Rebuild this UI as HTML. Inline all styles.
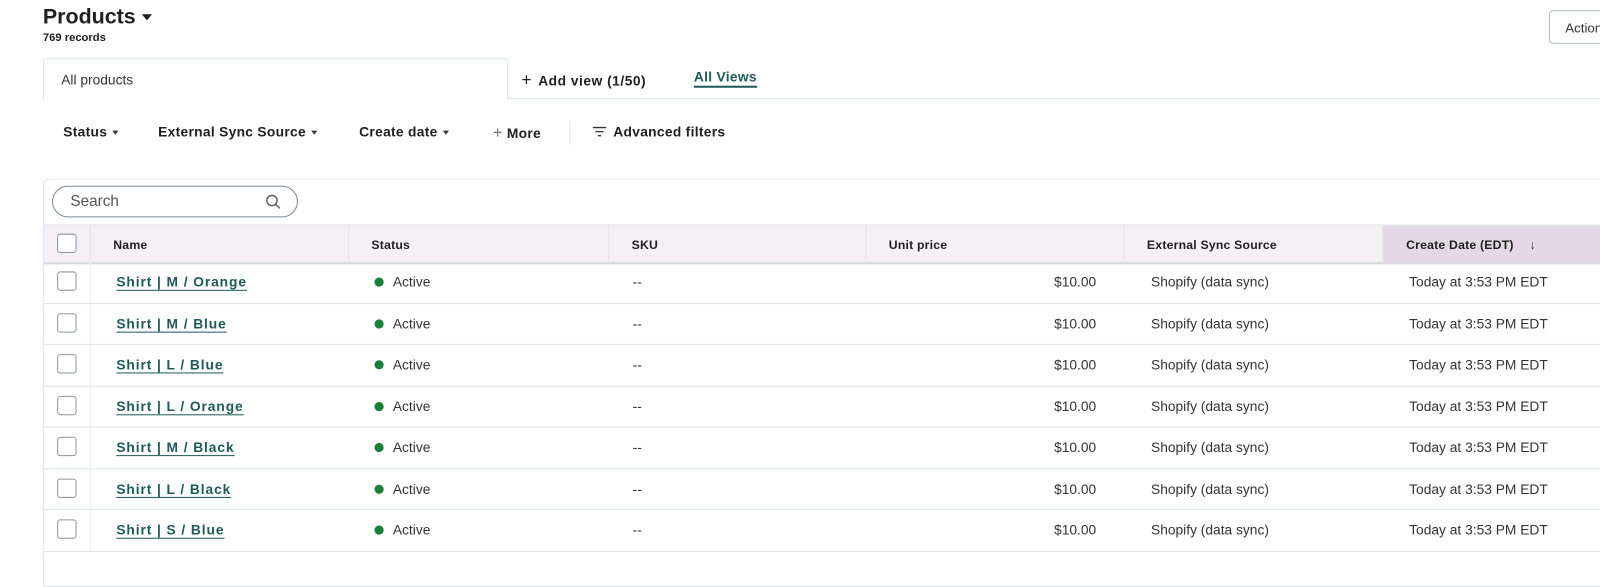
<!DOCTYPE html>
<html><head><meta charset="utf-8"><style>
*{box-sizing:border-box;margin:0;padding:0}
body{width:1600px;height:552px;overflow:hidden;background:#fff;font-family:"Liberation Sans",sans-serif;color:#21313c;position:relative}
#w{position:absolute;left:0;top:0;width:1568px;height:541px;transform:scale(1.0204);transform-origin:0 0}
.abs{position:absolute}
h1{position:absolute;left:42px;top:5px;font-size:21px;font-weight:bold;color:#1f1f1f}
.rec{left:42px;top:31px;font-size:11px;font-weight:bold;color:#1f1f1f}
.act{left:1518px;top:10px;width:100px;height:33px;border:1px solid #b6bcc2;border-radius:4px;font-size:13px;padding:9px 0 0 15px;color:#333}
.tabline{left:42px;top:96px;width:1558px;height:1px;background:#dfe3eb}
.tab{left:42px;top:57px;width:456px;height:41px;border:1px solid #dfe3eb;border-bottom:none;background:#fff;border-radius:3px 3px 0 0;font-size:13.5px;padding:13px 0 0 17px;color:#333}
.f{font-size:13.5px;font-weight:bold;color:#1f1f1f;top:122px;letter-spacing:0.3px}
.tri{display:inline-block;border-left:3px solid transparent;border-right:3px solid transparent;border-top:4px solid #333;vertical-align:middle;margin-left:5px}
.card{left:42px;top:175px;width:1570px;height:400px;border:1px solid #dfe3eb;border-radius:6px 0 0 0}
.search{left:51px;top:182px;width:241px;height:31px;border:1px solid #7c8b96;border-radius:16px;font-size:15px;color:#555;padding:6px 0 0 17px}
.hdr{left:43px;top:220px;width:1557px;height:39px;background:#f5f0f6;border-top:1px solid #dfe3eb;border-bottom:2px solid #d5d8de}
.hc{position:absolute;top:0;height:37px;border-left:1px solid #dfe3eb;font-size:12px;font-weight:bold;padding:12px 0 0 22px;color:#1f1f1f;letter-spacing:0.2px}
.cb{position:absolute;width:19px;height:19px;border:1px solid #8c969e;border-radius:3px;background:#fff}
.row{position:absolute;left:43px;width:1557px;height:40.5px;border-bottom:1px solid #dfe3eb}
.row span{position:absolute;top:12px;font-size:13.5px;color:#333}
.row .n{left:71px;font-weight:bold;color:#1e5a5a;text-decoration:underline;text-underline-offset:3px;letter-spacing:0.9px}
.dot{display:inline-block;width:9px;height:9px;border-radius:50%;background:#188038;margin-right:9px;vertical-align:0}
.vd{position:absolute;top:0;height:100%;width:1px;background:#eef0f3}
</style></head><body><div id="w">
<h1>Products <span class="tri" style="border-width:6px 5px 0 5px;border-top-color:#1f1f1f;margin-left:0"></span></h1>
<div class="abs rec">769 records</div>
<div class="abs act">Actions</div>
<div class="abs tabline"></div>
<div class="abs tab">All products</div>
<div class="abs" style="left:511px;top:69px;font-size:13.5px;font-weight:bold;color:#1f1f1f;letter-spacing:0.5px"><span style="font-weight:normal;font-size:17px;margin-right:6px">+</span>Add view (1/50)</div>
<div class="abs" style="left:680px;top:68px;font-size:13.5px;font-weight:bold;color:#1e5a5a;border-bottom:2px solid #1e5a5a;padding-bottom:1px;letter-spacing:0.3px">All Views</div>
<div class="abs f" style="left:62px">Status<span class="tri"></span></div>
<div class="abs f" style="left:155px">External Sync Source<span class="tri"></span></div>
<div class="abs f" style="left:352px">Create date<span class="tri"></span></div>
<div class="abs f" style="left:483px"><span style="font-weight:normal;color:#777;font-size:16px">+</span> More</div>
<div class="abs" style="left:558px;top:118px;width:1px;height:24px;background:#dfe3eb"></div>
<div class="abs f" style="left:580px"><svg width="15" height="12" style="vertical-align:-1px;margin-right:6px"><path d="M1 2h13M3.5 6h8M6 10h3" stroke="#333" stroke-width="1.3"/></svg>Advanced filters</div>
<div class="abs card"></div>
<div class="abs search">Search<svg class="abs" style="left:208px;top:7px" width="16" height="16"><circle cx="6.5" cy="6.5" r="5" fill="none" stroke="#555" stroke-width="1.3"/><path d="M10.2 10.2l4 4" stroke="#555" stroke-width="1.3"/></svg></div>
<div class="abs hdr">
<div class="cb" style="left:13px;top:8px"></div>
<div class="hc" style="left:45px;width:253px;padding-left:22px">Name</div>
<div class="hc" style="left:298px;width:255px">Status</div>
<div class="hc" style="left:553px;width:252px">SKU</div>
<div class="hc" style="left:805px;width:253px">Unit price</div>
<div class="hc" style="left:1058px;width:254px">External Sync Source</div>
<div class="hc" style="left:1312px;width:250px;background:#e5d8e6">Create Date (EDT) <span style="font-weight:normal;margin-left:12px">↓</span></div>
</div>
<div id="rows"></div>
</div>
<script>
var names=["Shirt | M / Orange","Shirt | M / Blue","Shirt | L / Blue","Shirt | L / Orange","Shirt | M / Black","Shirt | L / Black","Shirt | S / Blue"];
var h="";
names.forEach(function(n,i){var t=257+i*40.5;
h+='<div class="row" style="top:'+t+'px"><div class="vd" style="left:45px"></div><div class="cb" style="left:13px;top:9px"></div><span class="n">'+n+'</span><span style="left:324px"><i class="dot"></i>Active</span><span style="left:577px">--</span><span style="left:990px">$10.00</span><span style="left:1085px">Shopify (data sync)</span><span style="left:1338px">Today at 3:53 PM EDT</span></div>';});
document.getElementById("rows").innerHTML=h;
</script>
</body></html>
